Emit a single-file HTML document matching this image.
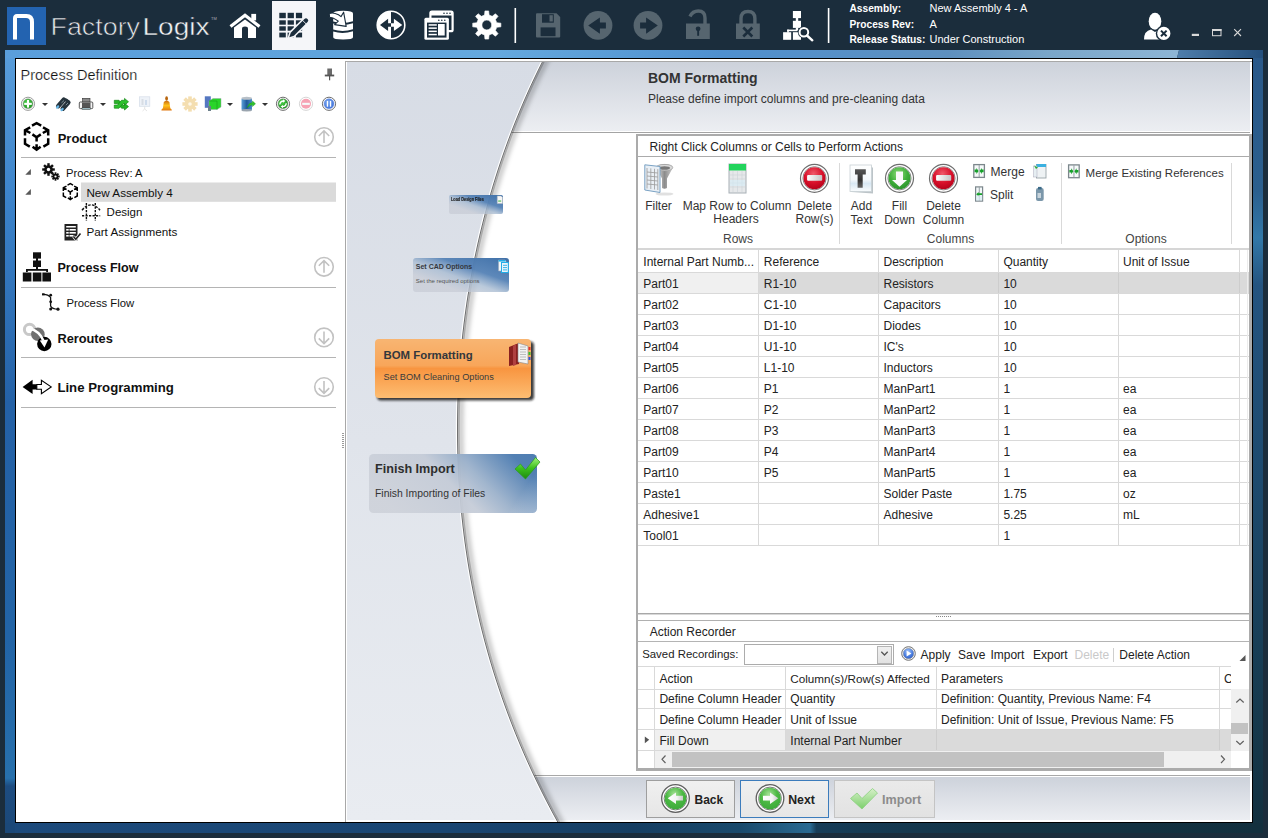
<!DOCTYPE html>
<html><head><meta charset="utf-8">
<style>
*{box-sizing:border-box}
body{margin:0;width:1268px;height:838px;overflow:hidden;position:relative;background:#1b2d3c;font-family:"Liberation Sans",sans-serif;color:#222}
.a{position:absolute}
.t{position:absolute;white-space:nowrap;line-height:1}
svg{overflow:visible}
</style></head><body>
<div id="topbar" class="a" style="left:0;top:0;width:1268px;height:50px;background:#1b2d3c">
<svg class="a" style="left:0;top:0" width="1268" height="50" viewBox="0 0 1268 50">
<rect x="7" y="7" width="39" height="38" fill="#2363b0"/>
<path d="M13,39.6 V18.2 Q13,14.3 17,14.1 L26.5,13.9 Q34,14 34,22 V39.6 H30 V22.2 Q30,18 26,18 H17 V39.6 Z" fill="#fff"/>
<text x="50.5" y="35" font-family="Liberation Sans" font-size="23" fill="#e6e8ea" textLength="89.5" lengthAdjust="spacingAndGlyphs" stroke="#1b2d3c" stroke-width="0.6">Factory</text>
<text x="142.5" y="35" font-family="Liberation Sans" font-size="23" fill="#f2f3f4" textLength="67" lengthAdjust="spacingAndGlyphs" stroke="#1b2d3c" stroke-width="0.4">Logix</text>
<text x="211" y="20" font-family="Liberation Sans" font-size="4" fill="#aab">TM</text>
<!-- home -->
<path d="M230.5,26.5 L245,15.3 L259.5,26.5" fill="none" stroke="#fff" stroke-width="3.2" stroke-linejoin="miter"/>
<rect x="251.3" y="13.9" width="4.8" height="6.5" fill="#fff"/>
<path d="M234,27.5 L245,19.6 L256,27.5 V38 H248 V29 Q248,26.6 245,26.6 Q242,26.6 242,29 V38 H234 Z" fill="#fff"/>
<!-- selected box -->
<rect x="272" y="1" width="44" height="49" fill="#f5f6f9"/>
<g fill="#1b2d3c">
<rect x="279.3" y="12.8" width="6.5" height="5.4"/><rect x="287.6" y="12.8" width="6.3" height="5.4"/><rect x="295.9" y="12.8" width="6.2" height="5.4"/>
<rect x="279.3" y="20.3" width="6.5" height="4.4"/><rect x="287.6" y="20.3" width="6.3" height="4.4"/><rect x="295.9" y="20.3" width="6.2" height="4.4"/>
<rect x="279.3" y="26.3" width="6.5" height="4.4"/><rect x="287.6" y="26.3" width="6.3" height="4.4"/><rect x="295.9" y="26.3" width="6.2" height="4.4"/>
<rect x="279.3" y="32.6" width="6.5" height="4.8"/><rect x="287.6" y="32.6" width="6.3" height="4.8"/><rect x="295.9" y="32.6" width="6.2" height="4.8"/>
</g>
<path d="M289.3,37.2 L290.74,32.64 L304.44,18.94 A2.2,2.2 0 0 1 307.56,22.06 L293.86,35.76 Z" fill="#1b2d3c" stroke="#f5f6f9" stroke-width="3" stroke-linejoin="round"/>
<path d="M289.3,37.2 L290.74,32.64 L304.44,18.94 A2.2,2.2 0 0 1 307.56,22.06 L293.86,35.76 Z" fill="#1b2d3c"/>
<path d="M302,19.8 L306.6,24.4" stroke="#f5f6f9" stroke-width=".9"/>
<!-- database -->
<path d="M333.2,13.2 Q333.2,10.7 343.1,10.7 Q353,10.7 353,13.2 V21.2 Q343,24.6 333.2,21.6 Z" fill="#fff"/>
<path d="M333.2,23.6 Q343,26.6 353,23.2 V29.3 Q343,32.4 333.2,29.6 Z" fill="#fff"/>
<path d="M333.2,31.6 Q343,34.5 353,31.2 V37.2 Q353,39.4 343.1,39.4 Q333.2,39.4 333.2,37.2 Z" fill="#fff"/>
<path d="M329.2,13.6 Q333,12 338.5,14.8 L341,16.6 L343.6,12.2 L346.2,26.4 L334.6,24.6 L338.3,21.2 L336,19.6 Q333,17.6 329.6,17.2 Z" fill="#fff" stroke="#1b2d3c" stroke-width="1.1" stroke-linejoin="round"/>
<!-- circle arrows -->
<circle cx="391" cy="25" r="13.8" fill="none" stroke="#fff" stroke-width="1.6"/>
<path d="M391,11.2 A13.8,13.8 0 0 0 391,38.8 Z" fill="#fff"/>
<path d="M380,25 L388.1,18.8 V23.2 H391 V26.7 H388.1 V31 Z" fill="#1b2d3c"/>
<path d="M402.3,25 L393.9,18.8 V23.2 H391 V26.7 H393.9 V31 Z" fill="#fff"/>
<!-- windows -->
<rect x="430.4" y="11.7" width="22.2" height="19.5" rx="1.5" fill="none" stroke="#fff" stroke-width="2.2"/>
<rect x="430" y="11" width="23" height="4.5" fill="#fff"/>
<circle cx="444" cy="13.2" r=".8" fill="#1b2d3c"/><circle cx="447" cy="13.2" r=".8" fill="#1b2d3c"/><circle cx="450" cy="13.2" r=".8" fill="#1b2d3c"/>
<rect x="424.4" y="17.8" width="24.5" height="22" rx="1.5" fill="#fff"/>
<rect x="427" y="22.6" width="19.5" height="15" fill="#1b2d3c"/>
<circle cx="438.8" cy="20.2" r=".8" fill="#1b2d3c"/><circle cx="441.8" cy="20.2" r=".8" fill="#1b2d3c"/><circle cx="444.8" cy="20.2" r=".8" fill="#1b2d3c"/>
<rect x="428.6" y="24.2" width="8.2" height="1.5" fill="#fff"/><rect x="428.6" y="27.4" width="8.2" height="1.5" fill="#fff"/><rect x="428.6" y="30.6" width="8.2" height="1.5" fill="#fff"/><rect x="428.6" y="33.8" width="8.2" height="1.5" fill="#fff"/>
<rect x="438" y="24" width="6.7" height="11.5" fill="#fff"/>
<!-- gear -->
<path d="M484.51,15.06 L484.95,10.92 L488.65,10.92 L489.09,15.06 L492.21,16.35 L495.44,13.73 L498.07,16.36 L495.45,19.59 L496.74,22.71 L500.88,23.15 L500.88,26.85 L496.74,27.29 L495.45,30.41 L498.07,33.64 L495.44,36.27 L492.21,33.65 L489.09,34.94 L488.65,39.08 L484.95,39.08 L484.51,34.94 L481.39,33.65 L478.16,36.27 L475.53,33.64 L478.15,30.41 L476.86,27.29 L472.72,26.85 L472.72,23.15 L476.86,22.71 L478.15,19.59 L475.53,16.36 L478.16,13.73 L481.39,16.35 Z M491.7,25 A4.9,4.9 0 1 0 481.90000000000003,25 A4.9,4.9 0 1 0 491.7,25 Z" fill="#fff" fill-rule="evenodd" stroke="#fff" stroke-width=".6" stroke-linejoin="round"/>
<rect x="514.5" y="8" width="1.6" height="35" fill="#fff"/>
<!-- floppy -->
<path d="M536,14.2 Q536,13.2 537,13.2 H556.5 L560.2,17 V36.6 Q560.2,37.6 559.2,37.6 H537 Q536,37.6 536,36.6 Z" fill="#56656f"/>
<rect x="542" y="14.2" width="11.8" height="8.5" fill="#1b2d3c"/>
<rect x="549.5" y="15.2" width="3.3" height="6.3" fill="#56656f"/>
<rect x="540.6" y="27.4" width="14.9" height="8.8" fill="#1b2d3c"/>
<!-- back/fwd -->
<circle cx="598" cy="25.4" r="14.4" fill="#56656f"/>
<path d="M588.2,25.4 L599.9,17.4 V22.4 H605.9 V28.4 H599.9 V33.7 Z" fill="#1b2d3c"/>
<circle cx="648" cy="25.4" r="14.4" fill="#56656f"/>
<path d="M657.8,25.4 L646.1,17.4 V22.4 H640.1 V28.4 H646.1 V33.7 Z" fill="#1b2d3c"/>
<!-- unlock -->
<path d="M690,16.5 Q692.5,11 698.3,11 Q705,11 705,18 V24" fill="none" stroke="#56656f" stroke-width="3.4"/>
<rect x="686" y="23.5" width="23.8" height="15.5" fill="#56656f"/>
<circle cx="698.1" cy="28.8" r="2.4" fill="#1b2d3c"/><rect x="697.2" y="29" width="1.9" height="6.8" fill="#1b2d3c"/>
<!-- lock x -->
<path d="M741,24 V18.5 Q741,11.5 748,11.5 Q754.9,11.5 754.9,18.5 V24" fill="none" stroke="#56656f" stroke-width="3.4"/>
<rect x="736" y="23.5" width="23.8" height="15.5" fill="#56656f"/>
<path d="M743.3,27.5 L752.3,36.5 M752.3,27.5 L743.3,36.5" stroke="#1b2d3c" stroke-width="2.6"/>
<!-- hierarchy search -->
<g fill="#fff">
<rect x="792.9" y="11" width="8.1" height="7.1"/><rect x="795.8" y="17.5" width="2.4" height="4"/>
<rect x="792.9" y="20.8" width="8.1" height="7.1"/><rect x="795.8" y="27.5" width="2.4" height="3"/>
<rect x="787.2" y="29.6" width="10" height="1.6"/><rect x="787.2" y="29.6" width="1.6" height="3"/>
<rect x="783.1" y="32.2" width="8.1" height="7.6"/><rect x="792.9" y="32.2" width="8.1" height="7.6"/>
</g>
<circle cx="803.9" cy="32.2" r="6" fill="#1b2d3c"/>
<circle cx="803.9" cy="32.2" r="4.3" fill="#1b2d3c" stroke="#fff" stroke-width="2"/>
<path d="M807,35.5 L812.3,40.3" stroke="#fff" stroke-width="2.4" stroke-linecap="round"/>
<rect x="827.8" y="8" width="1.6" height="35" fill="#fff"/>
<!-- user -->
<ellipse cx="1155" cy="21.3" rx="6.3" ry="8.5" fill="#fff"/>
<path d="M1144,39.6 Q1144,31 1151,29.6 L1155,32 L1159,29.6 Q1166,31 1166,39.6 Z" fill="#fff"/>
<circle cx="1163.8" cy="33.4" r="8" fill="#1b2d3c"/>
<circle cx="1163.8" cy="33.4" r="6.6" fill="#fff"/>
<path d="M1161,30.6 L1166.6,36.2 M1166.6,30.6 L1161,36.2" stroke="#1b2d3c" stroke-width="2"/>
<!-- window controls -->
<rect x="1191.8" y="33.8" width="7.2" height="2.2" fill="#d8d8d8"/>
<rect x="1212.5" y="29.5" width="8.5" height="6.2" fill="none" stroke="#d8d8d8" stroke-width="1"/>
<rect x="1212" y="29" width="9.5" height="2" fill="#d8d8d8"/>
<path d="M1234.2,29.2 L1241,36 M1241,29.2 L1234.2,36" stroke="#d8d8d8" stroke-width="1.1"/>
</svg>
<div class="t" style="left:849.5px;top:1.3px;font-size:10.2px;font-weight:700;color:#fff;line-height:15.5px">Assembly:<br>Process Rev:<br>Release Status:</div>
<div class="t" style="left:929.5px;top:1px;font-size:11px;color:#fff;line-height:15.5px">New Assembly 4 - A<br>A<br>Under Construction</div>
</div><svg class="a" style="left:0;top:0" width="1268" height="838" viewBox="0 0 1268 838">
<defs>
<linearGradient id="fT" x1="5" y1="0" x2="1263" y2="0" gradientUnits="userSpaceOnUse"><stop offset="0" stop-color="#5a9edb"/><stop offset=".25" stop-color="#5fa4dd"/><stop offset=".39" stop-color="#65a9de"/><stop offset=".57" stop-color="#4f90cf"/><stop offset=".75" stop-color="#5e90bf"/><stop offset=".83" stop-color="#7aa6c9"/><stop offset=".93" stop-color="#8db5d5"/><stop offset="1" stop-color="#8db5d5"/></linearGradient>
<linearGradient id="fT2" x1="1177" y1="0" x2="1263" y2="0" gradientUnits="userSpaceOnUse">
<stop offset="0" stop-color="#4f7eab"/><stop offset="1" stop-color="#244f7c"/></linearGradient>
<linearGradient id="fL" x1="0" y1="50" x2="0" y2="833" gradientUnits="userSpaceOnUse">
<stop offset="0" stop-color="#5a9edb"/><stop offset=".2" stop-color="#3b82c9"/><stop offset=".45" stop-color="#2461a6"/><stop offset=".75" stop-color="#2264a6"/><stop offset=".93" stop-color="#2770ac"/><stop offset=".94" stop-color="#1d4c80"/><stop offset="1" stop-color="#1b4878"/></linearGradient>
<linearGradient id="fB" x1="5" y1="0" x2="1263" y2="0" gradientUnits="userSpaceOnUse">
<stop offset="0" stop-color="#1c4a7c"/><stop offset=".35" stop-color="#1a4672"/><stop offset=".5" stop-color="#173f62"/><stop offset=".585" stop-color="#1a4a6c"/><stop offset=".64" stop-color="#2a6a92"/><stop offset=".645" stop-color="#173d58"/><stop offset=".8" stop-color="#153444"/><stop offset="1" stop-color="#13303e"/></linearGradient>
<linearGradient id="fR" x1="0" y1="50" x2="0" y2="833" gradientUnits="userSpaceOnUse">
<stop offset="0" stop-color="#2a5888"/><stop offset=".18" stop-color="#2b5f8e"/><stop offset=".24" stop-color="#3278a8"/><stop offset=".3" stop-color="#245480"/><stop offset=".55" stop-color="#1d4a6e"/><stop offset=".8" stop-color="#173c52"/><stop offset="1" stop-color="#13303e"/></linearGradient>
</defs>
<polygon points="5,50 1179,50 1177,58 5,58" fill="url(#fT)"/>
<polygon points="1179,50 1263,50 1263,58 1177,58" fill="url(#fT2)"/>
<rect x="5" y="58" width="10" height="775" fill="url(#fL)"/>
<rect x="1253" y="58" width="10" height="775" fill="url(#fR)"/>
<rect x="15" y="823" width="1238" height="10" fill="url(#fB)"/>
<rect x="5" y="823" width="10" height="10" fill="#1b4878"/>
<rect x="1253" y="823" width="10" height="10" fill="#13303e"/>
</svg>
<div id="content" class="a" style="left:15px;top:58px;width:1238px;height:765px;border:1px solid #000;background:#fff"></div>
<div class="t" style="left:20.5px;top:67.7px;font-size:14.5px;font-weight:400;color:#111;-webkit-text-stroke:0.22px #fff">Process Definition</div>
<svg class="a" style="left:0;top:0" width="346" height="838" viewBox="0 0 346 838">
<defs>
<radialGradient id="gG" cx=".4" cy=".35" r=".7"><stop offset="0" stop-color="#4cd34c"/><stop offset="1" stop-color="#1c8e1c"/></radialGradient>
<radialGradient id="bG" cx=".4" cy=".35" r=".7"><stop offset="0" stop-color="#7aa8f0"/><stop offset="1" stop-color="#3d6fd8"/></radialGradient>
<linearGradient id="bell" x1="0" y1="0" x2="0" y2="1"><stop offset="0" stop-color="#c86a10"/><stop offset=".5" stop-color="#ffc21a"/><stop offset="1" stop-color="#e07810"/></linearGradient>
<linearGradient id="dbG" x1="0" y1="0" x2="1" y2="0"><stop offset="0" stop-color="#5aa0d8"/><stop offset=".5" stop-color="#1e5a9a"/><stop offset="1" stop-color="#4a8cc8"/></linearGradient>
</defs>
<!-- pin -->
<path d="M327.3,68.5 H332 V75 H327.3 Z" fill="#6a6a6a"/>
<rect x="324.8" y="74.6" width="9.4" height="1.8" fill="#555"/>
<rect x="329" y="76" width="1.2" height="4.3" fill="#555"/>
<!-- plus circle -->
<circle cx="28" cy="103.8" r="6.6" fill="#fff" stroke="#9b9b9b" stroke-width="1"/>
<circle cx="28" cy="103.8" r="5" fill="url(#gG)" stroke="#aaa" stroke-width=".6"/>
<rect x="24.2" y="102.8" width="7.6" height="2.1" fill="#fff"/><rect x="26.95" y="100" width="2.1" height="7.6" fill="#fff"/>
<path d="M42,103 H48 L45,106 Z" fill="#333"/>
<!-- binoculars -->
<g stroke="#26343d" stroke-linecap="round" fill="none">
<path d="M58.3,106 L63.8,99.8" stroke-width="4.6"/>
<path d="M62.8,108.6 L68.3,102.4" stroke-width="4.6"/>
<path d="M63.8,99.8 Q67,99 68.3,102.4" stroke-width="3"/>
</g>
<path d="M61.5,102.8 L64,100.5 M65.8,105.2 L68,103" stroke="#8fa0aa" stroke-width=".8"/>
<ellipse cx="57.6" cy="107" rx="2" ry="1.3" transform="rotate(-48 57.6 107)" fill="#6ab8e8"/>
<ellipse cx="62.1" cy="109.5" rx="2" ry="1.3" transform="rotate(-48 62.1 109.5)" fill="#6ab8e8"/>
<!-- printer -->
<rect x="82.5" y="98.3" width="7.5" height="4" fill="#8a8a8a" stroke="#333" stroke-width=".6"/>
<rect x="79.3" y="102" width="13.5" height="6.6" rx="1" fill="#f4f4f4" stroke="#333" stroke-width=".8"/>
<rect x="82" y="102.5" width="8.5" height="6" fill="#555"/>
<rect x="82" y="108" width="8.5" height="1.6" fill="#bfe6ef" stroke="#333" stroke-width=".5"/>
<path d="M100,103 H106 L103,106 Z" fill="#333"/>
<!-- shuffle arrows -->
<path d="M114.3,100.3 H119 L123,105 H124.5 V103.2 L128.5,106.6 L124.5,110 V108.2 H121.5 L117.5,103.5 H114.3 Z" fill="#28b428" stroke="#168a16" stroke-width=".7"/>
<path d="M114.3,108.2 H119 L123,103.5 H124.5 V105.2 L128.5,101.8 L124.5,98.4 V100.3 H121.5 L117.5,105 H114.3 Z" fill="#2ec22e" stroke="#168a16" stroke-width=".7"/>
<!-- faded chart -->
<rect x="139.5" y="96.8" width="10.3" height="9.5" fill="#eef2f8" stroke="#d5dde8" stroke-width=".7"/>
<rect x="141.5" y="99" width="2" height="6" fill="#d8dde4"/><rect x="145" y="100" width="2" height="5" fill="#cfdcec"/>
<path d="M144.7,106.5 V109 L142.5,111 M144.7,109 L147,111" stroke="#ddd" stroke-width=".8" fill="none"/>
<!-- bell -->
<ellipse cx="166.6" cy="98.5" rx="1.4" ry="2.3" fill="#b8650e"/>
<path d="M163.8,102 Q166.6,99.3 169.4,102 L170.3,108.3 Q172,109.2 171.8,110.5 H161.4 Q161.2,109.2 162.9,108.3 Z" fill="url(#bell)"/>
<!-- pale gear -->
<g transform="translate(190,104)" fill="#f4deb0">
<circle r="5.3"/>
<rect x="-1.8" y="-7.6" width="3.6" height="3.4"/><rect x="-1.8" y="4.2" width="3.6" height="3.4"/>
<rect x="-7.6" y="-1.8" width="3.4" height="3.6"/><rect x="4.2" y="-1.8" width="3.4" height="3.6"/>
<rect x="-1.8" y="-7.6" width="3.6" height="3.4" transform="rotate(45)"/><rect x="-1.8" y="4.2" width="3.6" height="3.4" transform="rotate(45)"/>
<rect x="-7.6" y="-1.8" width="3.4" height="3.6" transform="rotate(45)"/><rect x="4.2" y="-1.8" width="3.4" height="3.6" transform="rotate(45)"/>
<circle r="1.8" fill="#fff8e8"/>
</g>
<!-- box green -->
<rect x="204.8" y="96.3" width="6" height="11.5" fill="#5577c0"/>
<path d="M209,101 L213,98.5 H221 V107 L217,109.5 H209 Z" fill="#2ad42a" stroke="#9aa" stroke-width=".5"/>
<path d="M209,101 H217 V109.5" fill="none" stroke="#1a9a1a" stroke-width=".6"/>
<rect x="208" y="106" width="3" height="5" fill="#6c7f8a"/>
<path d="M227,103 H233 L230,106 Z" fill="#333"/>
<!-- database arrow -->
<rect x="241.5" y="98" width="10.5" height="12.5" rx="1.5" fill="url(#dbG)"/>
<ellipse cx="246.7" cy="98.3" rx="5.2" ry="1.5" fill="#b8c0c8"/>
<ellipse cx="246.7" cy="110.2" rx="5.2" ry="1.2" fill="#9aa4ae"/>
<path d="M247,107.8 Q249,102.5 252.5,102.6 V101 L255.5,103.8 L252.5,106.5 V104.8 Q250,105 247,107.8 Z" fill="#2ec22e" stroke="#148a14" stroke-width=".4"/>
<path d="M262,103 H268 L265,106 Z" fill="#333"/>
<!-- green refresh circle -->
<circle cx="283" cy="103.8" r="6.6" fill="#fff" stroke="#6e6e6e" stroke-width="1"/>
<circle cx="283" cy="103.8" r="5" fill="url(#gG)" stroke="#888" stroke-width=".5"/>
<path d="M279.8,104.5 Q280,101.2 283.5,101 M286.2,103.2 Q286,106.5 282.5,106.6" stroke="#fff" stroke-width="1.4" fill="none"/>
<path d="M283,99.3 L285.4,101 L283,102.7 Z M283,108.3 L280.6,106.6 L283,104.9 Z" fill="#fff"/>
<!-- pink minus -->
<circle cx="306" cy="103.8" r="6.6" fill="#fff" stroke="#d6d6d6" stroke-width="1"/>
<circle cx="306" cy="103.8" r="5" fill="#f6a3b4"/>
<rect x="302.2" y="102.8" width="7.6" height="2.1" fill="#f4fbfb"/>
<!-- blue pause -->
<circle cx="329" cy="103.8" r="6.6" fill="#fff" stroke="#6e6e6e" stroke-width="1"/>
<circle cx="329" cy="103.8" r="5" fill="url(#bG)" stroke="#6b8de0" stroke-width=".5"/>
<rect x="326.8" y="100.9" width="1.3" height="5.8" fill="#fff"/><rect x="329.9" y="100.9" width="1.3" height="5.8" fill="#fff"/>

<!-- Product icon -->
<g id="prodIco" fill="none" stroke="#000" stroke-width="2.5" stroke-linejoin="miter" stroke-linecap="butt">
<path d="M32,125.6 L36.6,123.2 L41.2,125.6"/>
<path d="M30.2,127.4 L25,130.2 V135.4 M25,130.2 L30.4,133"/>
<path d="M43,127.4 L48.2,130.2 V135.4 M48.2,130.2 L42.8,133"/>
<path d="M32.4,134.4 L36.6,137.2 L40.8,134.4 M36.6,137.2 V141.6"/>
<path d="M25,138.2 V143.8 L29.8,146.6"/>
<path d="M48.2,138.2 V143.8 L43.4,146.6"/>
<path d="M36.6,144.2 V149.2 M32.6,146.8 L36.6,149.8 L40.6,146.8"/>
</g>
<!-- up circles -->
<g fill="none" stroke="#c2c2c2" stroke-width="1.6">
<circle cx="324" cy="137" r="9.3"/><path d="M324,131 V143 M318.8,136 L324,130.8 L329.2,136"/>
<circle cx="324" cy="266.8" r="9.3"/><path d="M324,260.8 V272.8 M318.8,265.8 L324,260.6 L329.2,265.8"/>
<circle cx="324" cy="337.4" r="9.3"/><path d="M324,331.4 V343.4 M318.8,338.4 L324,343.6 L329.2,338.4"/>
<circle cx="324" cy="387.1" r="9.3"/><path d="M324,381.1 V393.1 M318.8,388.1 L324,393.3 L329.2,388.1"/>
</g>
<!-- separators -->
<rect x="21" y="157" width="315" height="1" fill="#b4b4b4"/>
<rect x="21" y="287" width="315" height="1" fill="#b4b4b4"/>
<rect x="21" y="357" width="315" height="1" fill="#b4b4b4"/>
<rect x="21" y="407" width="315" height="1" fill="#b4b4b4"/>
<!-- selection -->
<rect x="81" y="182.5" width="255" height="19.3" fill="#dadada"/>
<!-- expanders -->
<path d="M25.3,174.7 H30.9 V169 Z" fill="#595959"/>
<path d="M25.3,194.7 H30.9 V189 Z" fill="#595959"/>
<!-- gears icon -->
<g transform="translate(48.5,169.5)" fill="#111">
<circle r="4.3"/>
<rect x="-1.2" y="-6.3" width="2.4" height="12.6"/><rect x="-6.3" y="-1.2" width="12.6" height="2.4"/>
<rect x="-1.2" y="-6.3" width="2.4" height="12.6" transform="rotate(45)"/><rect x="-6.3" y="-1.2" width="12.6" height="2.4" transform="rotate(45)"/>
<circle r="1.7" fill="#fff"/>
</g>
<g transform="translate(55.5,176.5)" fill="#111">
<circle r="2.8"/>
<rect x="-.9" y="-4.2" width="1.8" height="8.4"/><rect x="-4.2" y="-.9" width="8.4" height="1.8"/>
<rect x="-.9" y="-4.2" width="1.8" height="8.4" transform="rotate(45)"/><rect x="-4.2" y="-.9" width="8.4" height="1.8" transform="rotate(45)"/>
<circle r="1.1" fill="#fff"/>
</g>
<!-- assembly icon small -->
<use href="#prodIco" transform="translate(70.3,191.6) scale(0.6) translate(-36.6,-136.5)"/>
<!-- design icon -->
<g fill="none" stroke="#111" stroke-width="1.4">
<path d="M86.4,203 V221 M95.3,203 V221 M82,215.7 H100.2" stroke-dasharray="2.2 1.3"/>
<path d="M82,210.2 Q90.8,199.5 100,210.2" stroke-dasharray="2.6 1.3"/>
</g>
<!-- part assignments icon -->
<rect x="64.5" y="224" width="13" height="16.5" fill="#222"/>
<rect x="66.2" y="226" width="9.6" height="1.5" fill="#fff"/>
<g fill="#fff"><rect x="66.2" y="229" width="2.5" height="1.6"/><rect x="69.5" y="229" width="6.3" height="1.6"/>
<rect x="66.2" y="232" width="2.5" height="1.6"/><rect x="69.5" y="232" width="6.3" height="1.6"/>
<rect x="66.2" y="235" width="2.5" height="1.6"/><rect x="69.5" y="235" width="4" height="1.6"/></g>
<path d="M73.5,236.5 L75.8,239.2 L80.5,233.5" fill="none" stroke="#fff" stroke-width="3"/>
<path d="M73.5,236.5 L75.8,239.2 L80.5,233.5" fill="none" stroke="#222" stroke-width="1.6"/>
<!-- process flow icon -->
<g fill="#111">
<rect x="33" y="252.3" width="8" height="6.3"/><rect x="36" y="258" width="2" height="3"/>
<rect x="33" y="260.5" width="8" height="6.5"/><rect x="36" y="266.5" width="2" height="3"/>
<rect x="26" y="269" width="22" height="1.8"/><rect x="26" y="269" width="1.8" height="3"/><rect x="46.2" y="269" width="1.8" height="3"/>
<rect x="22.8" y="272.5" width="8.6" height="9"/><rect x="32.8" y="272.5" width="8.6" height="9"/><rect x="42.4" y="272.5" width="8.6" height="9"/>
</g>
<!-- sub process flow icon -->
<path d="M43.2,294.3 Q48.5,294.3 50.6,297.5 V306 Q52,309.2 58,309.2" fill="none" stroke="#111" stroke-width="1.3"/>
<rect x="42" y="293.3" width="2.6" height="2.1" fill="#111"/>
<circle cx="50.7" cy="295.2" r="1.4" fill="#111"/><circle cx="50.7" cy="301.8" r="1.4" fill="#111"/><circle cx="50.7" cy="309" r="1.5" fill="#111"/><circle cx="58" cy="309.2" r="1.6" fill="#111"/>
<!-- reroutes icon -->
<circle cx="29.6" cy="329.4" r="5.2" fill="none" stroke="#c8c8c8" stroke-width="3"/>
<circle cx="37.9" cy="334.2" r="6.8" fill="#707070"/>
<circle cx="44.3" cy="344" r="7.2" fill="#000"/>
<circle cx="44.3" cy="344" r="4.2" fill="none" stroke="#fff" stroke-width="1" opacity="0"/>
<path d="M29.5,328.5 Q39.5,331 43.3,340.5" fill="none" stroke="#fff" stroke-width="2.6"/>
<path d="M39.8,340.5 L44.5,347.6 L48.2,339.6 Z" fill="#fff"/>
<!-- line programming icon -->
<path d="M22.6,386.9 L32.6,379.8 V384.3 H37.2 V389.4 H32.6 V394 Z" fill="#000"/>
<path d="M51.2,386.9 L41.4,380.2 V384.5 H36.8 V389.2 H41.4 V393.6 Z" fill="#fff" stroke="#000" stroke-width="1.1" stroke-linejoin="miter"/>
</svg>
<div class="t" style="left:57.7px;top:132.0px;font-size:13px;font-weight:700;color:#111;">Product</div>
<div class="t" style="left:66px;top:167.5px;font-size:11.2px;font-weight:400;color:#111;">Process Rev: A</div>
<div class="t" style="left:86.4px;top:186.6px;font-size:11.7px;font-weight:400;color:#111;">New Assembly 4</div>
<div class="t" style="left:106.6px;top:207.0px;font-size:11.5px;font-weight:400;color:#111;">Design</div>
<div class="t" style="left:86.4px;top:226.1px;font-size:11.7px;font-weight:400;color:#111;">Part Assignments</div>
<div class="t" style="left:57.4px;top:262.3px;font-size:12.6px;font-weight:700;color:#111;">Process Flow</div>
<div class="t" style="left:66.4px;top:298.1px;font-size:11.3px;font-weight:400;color:#111;">Process Flow</div>
<div class="t" style="left:57.4px;top:332.7px;font-size:12.8px;font-weight:700;color:#111;">Reroutes</div>
<div class="t" style="left:57.4px;top:381.2px;font-size:13.2px;font-weight:700;color:#111;">Line Programming</div>
<div class="a" style="left:342px;top:433px;width:2px;height:1px;background:#9a9a9a;"></div>
<div class="a" style="left:342px;top:435px;width:2px;height:1px;background:#9a9a9a;"></div>
<div class="a" style="left:342px;top:437px;width:2px;height:1px;background:#9a9a9a;"></div>
<div class="a" style="left:342px;top:439px;width:2px;height:1px;background:#9a9a9a;"></div>
<div class="a" style="left:342px;top:441px;width:2px;height:1px;background:#9a9a9a;"></div>
<div class="a" style="left:342px;top:443px;width:2px;height:1px;background:#9a9a9a;"></div>
<div class="a" style="left:342px;top:445px;width:2px;height:1px;background:#9a9a9a;"></div>
<div class="a" style="left:342px;top:447px;width:2px;height:1px;background:#9a9a9a;"></div><div id="wiz" class="a" style="left:345px;top:61px;width:907px;height:761px;border-left:1px solid #a8a8a8;border-top:1px solid #a8a8a8;overflow:hidden">
<svg class="a" style="left:-346px;top:-62px" width="1268" height="838" viewBox="0 0 1268 838">
<defs>
<linearGradient id="lg" x1="0" y1="0" x2="0" y2="1"><stop offset="0" stop-color="#d7dce5"/><stop offset="1" stop-color="#e9ecf1"/></linearGradient>
<linearGradient id="hg" x1="0" y1="0" x2="0" y2="1"><stop offset="0" stop-color="#cdd2db"/><stop offset="1" stop-color="#eceef2"/></linearGradient>
<clipPath id="rc"><path d="M549.64,48 L548.06,51 L546.50,54 L544.95,57 L543.43,60 L541.92,63 L540.42,66 L538.95,69 L537.49,72 L536.04,75 L534.61,78 L533.20,81 L531.81,84 L530.43,87 L529.06,90 L527.71,93 L526.38,96 L525.06,99 L523.76,102 L522.47,105 L521.20,108 L519.94,111 L518.70,114 L517.47,117 L516.26,120 L515.06,123 L513.87,126 L512.70,129 L511.55,132 L510.41,135 L509.28,138 L508.17,141 L507.07,144 L505.98,147 L504.91,150 L503.85,153 L502.81,156 L501.78,159 L500.76,162 L499.76,165 L498.77,168 L497.79,171 L496.82,174 L495.87,177 L494.94,180 L494.01,183 L493.10,186 L492.20,189 L491.31,192 L490.44,195 L489.58,198 L488.73,201 L487.89,204 L487.07,207 L486.25,210 L485.45,213 L484.67,216 L483.89,219 L483.13,222 L482.38,225 L481.64,228 L480.91,231 L480.20,234 L479.49,237 L478.80,240 L478.12,243 L477.45,246 L476.80,249 L476.15,252 L475.52,255 L474.90,258 L474.29,261 L473.69,264 L473.10,267 L472.52,270 L471.96,273 L471.40,276 L470.86,279 L470.33,282 L469.81,285 L469.30,288 L468.80,291 L468.32,294 L467.84,297 L467.37,300 L466.92,303 L466.48,306 L466.05,309 L465.62,312 L465.21,315 L464.82,318 L464.43,321 L464.05,324 L463.68,327 L463.33,330 L462.98,333 L462.64,336 L462.32,339 L462.01,342 L461.70,345 L461.41,348 L461.13,351 L460.86,354 L460.60,357 L460.35,360 L460.11,363 L459.88,366 L459.66,369 L459.46,372 L459.26,375 L459.07,378 L458.90,381 L458.73,384 L458.58,387 L458.43,390 L458.30,393 L458.18,396 L458.06,399 L457.96,402 L457.87,405 L457.79,408 L457.72,411 L457.66,414 L457.61,417 L457.57,420 L457.54,423 L457.52,426 L457.52,429 L457.52,432 L457.53,435 L457.56,438 L457.59,441 L457.64,444 L457.69,447 L457.76,450 L457.84,453 L457.92,456 L458.02,459 L458.13,462 L458.25,465 L458.38,468 L458.52,471 L458.68,474 L458.84,477 L459.01,480 L459.20,483 L459.39,486 L459.60,489 L459.82,492 L460.04,495 L460.28,498 L460.53,501 L460.79,504 L461.06,507 L461.35,510 L461.64,513 L461.94,516 L462.26,519 L462.58,522 L462.92,525 L463.27,528 L463.63,531 L464.00,534 L464.38,537 L464.78,540 L465.18,543 L465.60,546 L466.03,549 L466.47,552 L466.92,555 L467.38,558 L467.85,561 L468.34,564 L468.83,567 L469.34,570 L469.86,573 L470.39,576 L470.93,579 L471.49,582 L472.05,585 L472.63,588 L473.22,591 L473.82,594 L474.44,597 L475.06,600 L475.70,603 L476.35,606 L477.01,609 L477.69,612 L478.37,615 L479.07,618 L479.78,621 L480.51,624 L481.24,627 L481.99,630 L482.75,633 L483.52,636 L484.31,639 L485.10,642 L485.91,645 L486.74,648 L487.57,651 L488.42,654 L489.28,657 L490.15,660 L491.04,663 L491.94,666 L492.85,669 L493.78,672 L494.72,675 L495.67,678 L496.64,681 L497.61,684 L498.60,687 L499.61,690 L500.63,693 L501.66,696 L502.70,699 L503.76,702 L504.84,705 L505.92,708 L507.02,711 L508.13,714 L509.26,717 L510.40,720 L511.56,723 L512.72,726 L513.91,729 L515.10,732 L516.31,735 L517.54,738 L518.78,741 L520.03,744 L521.30,747 L522.58,750 L523.88,753 L525.19,756 L526.52,759 L527.86,762 L529.21,765 L530.58,768 L531.96,771 L533.36,774 L534.78,777 L536.21,780 L537.65,783 L539.11,786 L540.58,789 L542.07,792 L543.58,795 L545.10,798 L546.63,801 L548.18,804 L549.75,807 L551.33,810 L552.92,813 L554.54,816 L556.17,819 L557.81,822 L559.47,825 L561.14,828 L562.83,831 L564.54,834 L1300,830 L1300,40 Z"/></clipPath>
<filter id="bl" x="-50%" y="-10%" width="200%" height="120%"><feGaussianBlur stdDeviation="2"/></filter><filter id="bl2" x="-50%" y="-10%" width="200%" height="120%"><feGaussianBlur stdDeviation=".7"/></filter>
</defs>
<rect x="0" y="0" width="1268" height="838" fill="#fff"/>
<rect x="347" y="62" width="903" height="758" fill="url(#lg)"/>
<g clip-path="url(#rc)">
<rect x="340" y="62" width="920" height="770" fill="#fff"/>
<rect x="340" y="62" width="910" height="69" fill="url(#hg)"/>
<rect x="340" y="132" width="910" height="1" fill="#a4a4a4"/>
<rect x="340" y="775" width="910" height="1" fill="#a8a8a8"/>
<rect x="340" y="776" width="910" height="1" fill="#fff"/><rect x="340" y="777" width="910" height="43" fill="url(#hg)"/>
<path d="M549.64,48 L548.06,51 L546.50,54 L544.95,57 L543.43,60 L541.92,63 L540.42,66 L538.95,69 L537.49,72 L536.04,75 L534.61,78 L533.20,81 L531.81,84 L530.43,87 L529.06,90 L527.71,93 L526.38,96 L525.06,99 L523.76,102 L522.47,105 L521.20,108 L519.94,111 L518.70,114 L517.47,117 L516.26,120 L515.06,123 L513.87,126 L512.70,129 L511.55,132 L510.41,135 L509.28,138 L508.17,141 L507.07,144 L505.98,147 L504.91,150 L503.85,153 L502.81,156 L501.78,159 L500.76,162 L499.76,165 L498.77,168 L497.79,171 L496.82,174 L495.87,177 L494.94,180 L494.01,183 L493.10,186 L492.20,189 L491.31,192 L490.44,195 L489.58,198 L488.73,201 L487.89,204 L487.07,207 L486.25,210 L485.45,213 L484.67,216 L483.89,219 L483.13,222 L482.38,225 L481.64,228 L480.91,231 L480.20,234 L479.49,237 L478.80,240 L478.12,243 L477.45,246 L476.80,249 L476.15,252 L475.52,255 L474.90,258 L474.29,261 L473.69,264 L473.10,267 L472.52,270 L471.96,273 L471.40,276 L470.86,279 L470.33,282 L469.81,285 L469.30,288 L468.80,291 L468.32,294 L467.84,297 L467.37,300 L466.92,303 L466.48,306 L466.05,309 L465.62,312 L465.21,315 L464.82,318 L464.43,321 L464.05,324 L463.68,327 L463.33,330 L462.98,333 L462.64,336 L462.32,339 L462.01,342 L461.70,345 L461.41,348 L461.13,351 L460.86,354 L460.60,357 L460.35,360 L460.11,363 L459.88,366 L459.66,369 L459.46,372 L459.26,375 L459.07,378 L458.90,381 L458.73,384 L458.58,387 L458.43,390 L458.30,393 L458.18,396 L458.06,399 L457.96,402 L457.87,405 L457.79,408 L457.72,411 L457.66,414 L457.61,417 L457.57,420 L457.54,423 L457.52,426 L457.52,429 L457.52,432 L457.53,435 L457.56,438 L457.59,441 L457.64,444 L457.69,447 L457.76,450 L457.84,453 L457.92,456 L458.02,459 L458.13,462 L458.25,465 L458.38,468 L458.52,471 L458.68,474 L458.84,477 L459.01,480 L459.20,483 L459.39,486 L459.60,489 L459.82,492 L460.04,495 L460.28,498 L460.53,501 L460.79,504 L461.06,507 L461.35,510 L461.64,513 L461.94,516 L462.26,519 L462.58,522 L462.92,525 L463.27,528 L463.63,531 L464.00,534 L464.38,537 L464.78,540 L465.18,543 L465.60,546 L466.03,549 L466.47,552 L466.92,555 L467.38,558 L467.85,561 L468.34,564 L468.83,567 L469.34,570 L469.86,573 L470.39,576 L470.93,579 L471.49,582 L472.05,585 L472.63,588 L473.22,591 L473.82,594 L474.44,597 L475.06,600 L475.70,603 L476.35,606 L477.01,609 L477.69,612 L478.37,615 L479.07,618 L479.78,621 L480.51,624 L481.24,627 L481.99,630 L482.75,633 L483.52,636 L484.31,639 L485.10,642 L485.91,645 L486.74,648 L487.57,651 L488.42,654 L489.28,657 L490.15,660 L491.04,663 L491.94,666 L492.85,669 L493.78,672 L494.72,675 L495.67,678 L496.64,681 L497.61,684 L498.60,687 L499.61,690 L500.63,693 L501.66,696 L502.70,699 L503.76,702 L504.84,705 L505.92,708 L507.02,711 L508.13,714 L509.26,717 L510.40,720 L511.56,723 L512.72,726 L513.91,729 L515.10,732 L516.31,735 L517.54,738 L518.78,741 L520.03,744 L521.30,747 L522.58,750 L523.88,753 L525.19,756 L526.52,759 L527.86,762 L529.21,765 L530.58,768 L531.96,771 L533.36,774 L534.78,777 L536.21,780 L537.65,783 L539.11,786 L540.58,789 L542.07,792 L543.58,795 L545.10,798 L546.63,801 L548.18,804 L549.75,807 L551.33,810 L552.92,813 L554.54,816 L556.17,819 L557.81,822 L559.47,825 L561.14,828 L562.83,831 L564.54,834" fill="none" stroke="#000" stroke-opacity=".2" stroke-width="6" filter="url(#bl)" transform="translate(3.2,0)"/>
<path d="M549.64,48 L548.06,51 L546.50,54 L544.95,57 L543.43,60 L541.92,63 L540.42,66 L538.95,69 L537.49,72 L536.04,75 L534.61,78 L533.20,81 L531.81,84 L530.43,87 L529.06,90 L527.71,93 L526.38,96 L525.06,99 L523.76,102 L522.47,105 L521.20,108 L519.94,111 L518.70,114 L517.47,117 L516.26,120 L515.06,123 L513.87,126 L512.70,129 L511.55,132 L510.41,135 L509.28,138 L508.17,141 L507.07,144 L505.98,147 L504.91,150 L503.85,153 L502.81,156 L501.78,159 L500.76,162 L499.76,165 L498.77,168 L497.79,171 L496.82,174 L495.87,177 L494.94,180 L494.01,183 L493.10,186 L492.20,189 L491.31,192 L490.44,195 L489.58,198 L488.73,201 L487.89,204 L487.07,207 L486.25,210 L485.45,213 L484.67,216 L483.89,219 L483.13,222 L482.38,225 L481.64,228 L480.91,231 L480.20,234 L479.49,237 L478.80,240 L478.12,243 L477.45,246 L476.80,249 L476.15,252 L475.52,255 L474.90,258 L474.29,261 L473.69,264 L473.10,267 L472.52,270 L471.96,273 L471.40,276 L470.86,279 L470.33,282 L469.81,285 L469.30,288 L468.80,291 L468.32,294 L467.84,297 L467.37,300 L466.92,303 L466.48,306 L466.05,309 L465.62,312 L465.21,315 L464.82,318 L464.43,321 L464.05,324 L463.68,327 L463.33,330 L462.98,333 L462.64,336 L462.32,339 L462.01,342 L461.70,345 L461.41,348 L461.13,351 L460.86,354 L460.60,357 L460.35,360 L460.11,363 L459.88,366 L459.66,369 L459.46,372 L459.26,375 L459.07,378 L458.90,381 L458.73,384 L458.58,387 L458.43,390 L458.30,393 L458.18,396 L458.06,399 L457.96,402 L457.87,405 L457.79,408 L457.72,411 L457.66,414 L457.61,417 L457.57,420 L457.54,423 L457.52,426 L457.52,429 L457.52,432 L457.53,435 L457.56,438 L457.59,441 L457.64,444 L457.69,447 L457.76,450 L457.84,453 L457.92,456 L458.02,459 L458.13,462 L458.25,465 L458.38,468 L458.52,471 L458.68,474 L458.84,477 L459.01,480 L459.20,483 L459.39,486 L459.60,489 L459.82,492 L460.04,495 L460.28,498 L460.53,501 L460.79,504 L461.06,507 L461.35,510 L461.64,513 L461.94,516 L462.26,519 L462.58,522 L462.92,525 L463.27,528 L463.63,531 L464.00,534 L464.38,537 L464.78,540 L465.18,543 L465.60,546 L466.03,549 L466.47,552 L466.92,555 L467.38,558 L467.85,561 L468.34,564 L468.83,567 L469.34,570 L469.86,573 L470.39,576 L470.93,579 L471.49,582 L472.05,585 L472.63,588 L473.22,591 L473.82,594 L474.44,597 L475.06,600 L475.70,603 L476.35,606 L477.01,609 L477.69,612 L478.37,615 L479.07,618 L479.78,621 L480.51,624 L481.24,627 L481.99,630 L482.75,633 L483.52,636 L484.31,639 L485.10,642 L485.91,645 L486.74,648 L487.57,651 L488.42,654 L489.28,657 L490.15,660 L491.04,663 L491.94,666 L492.85,669 L493.78,672 L494.72,675 L495.67,678 L496.64,681 L497.61,684 L498.60,687 L499.61,690 L500.63,693 L501.66,696 L502.70,699 L503.76,702 L504.84,705 L505.92,708 L507.02,711 L508.13,714 L509.26,717 L510.40,720 L511.56,723 L512.72,726 L513.91,729 L515.10,732 L516.31,735 L517.54,738 L518.78,741 L520.03,744 L521.30,747 L522.58,750 L523.88,753 L525.19,756 L526.52,759 L527.86,762 L529.21,765 L530.58,768 L531.96,771 L533.36,774 L534.78,777 L536.21,780 L537.65,783 L539.11,786 L540.58,789 L542.07,792 L543.58,795 L545.10,798 L546.63,801 L548.18,804 L549.75,807 L551.33,810 L552.92,813 L554.54,816 L556.17,819 L557.81,822 L559.47,825 L561.14,828 L562.83,831 L564.54,834" fill="none" stroke="#000" stroke-opacity=".22" stroke-width="1.6" filter="url(#bl2)" transform="translate(1.4,0)"/>
</g>
<path d="M549.64,48 L548.06,51 L546.50,54 L544.95,57 L543.43,60 L541.92,63 L540.42,66 L538.95,69 L537.49,72 L536.04,75 L534.61,78 L533.20,81 L531.81,84 L530.43,87 L529.06,90 L527.71,93 L526.38,96 L525.06,99 L523.76,102 L522.47,105 L521.20,108 L519.94,111 L518.70,114 L517.47,117 L516.26,120 L515.06,123 L513.87,126 L512.70,129 L511.55,132 L510.41,135 L509.28,138 L508.17,141 L507.07,144 L505.98,147 L504.91,150 L503.85,153 L502.81,156 L501.78,159 L500.76,162 L499.76,165 L498.77,168 L497.79,171 L496.82,174 L495.87,177 L494.94,180 L494.01,183 L493.10,186 L492.20,189 L491.31,192 L490.44,195 L489.58,198 L488.73,201 L487.89,204 L487.07,207 L486.25,210 L485.45,213 L484.67,216 L483.89,219 L483.13,222 L482.38,225 L481.64,228 L480.91,231 L480.20,234 L479.49,237 L478.80,240 L478.12,243 L477.45,246 L476.80,249 L476.15,252 L475.52,255 L474.90,258 L474.29,261 L473.69,264 L473.10,267 L472.52,270 L471.96,273 L471.40,276 L470.86,279 L470.33,282 L469.81,285 L469.30,288 L468.80,291 L468.32,294 L467.84,297 L467.37,300 L466.92,303 L466.48,306 L466.05,309 L465.62,312 L465.21,315 L464.82,318 L464.43,321 L464.05,324 L463.68,327 L463.33,330 L462.98,333 L462.64,336 L462.32,339 L462.01,342 L461.70,345 L461.41,348 L461.13,351 L460.86,354 L460.60,357 L460.35,360 L460.11,363 L459.88,366 L459.66,369 L459.46,372 L459.26,375 L459.07,378 L458.90,381 L458.73,384 L458.58,387 L458.43,390 L458.30,393 L458.18,396 L458.06,399 L457.96,402 L457.87,405 L457.79,408 L457.72,411 L457.66,414 L457.61,417 L457.57,420 L457.54,423 L457.52,426 L457.52,429 L457.52,432 L457.53,435 L457.56,438 L457.59,441 L457.64,444 L457.69,447 L457.76,450 L457.84,453 L457.92,456 L458.02,459 L458.13,462 L458.25,465 L458.38,468 L458.52,471 L458.68,474 L458.84,477 L459.01,480 L459.20,483 L459.39,486 L459.60,489 L459.82,492 L460.04,495 L460.28,498 L460.53,501 L460.79,504 L461.06,507 L461.35,510 L461.64,513 L461.94,516 L462.26,519 L462.58,522 L462.92,525 L463.27,528 L463.63,531 L464.00,534 L464.38,537 L464.78,540 L465.18,543 L465.60,546 L466.03,549 L466.47,552 L466.92,555 L467.38,558 L467.85,561 L468.34,564 L468.83,567 L469.34,570 L469.86,573 L470.39,576 L470.93,579 L471.49,582 L472.05,585 L472.63,588 L473.22,591 L473.82,594 L474.44,597 L475.06,600 L475.70,603 L476.35,606 L477.01,609 L477.69,612 L478.37,615 L479.07,618 L479.78,621 L480.51,624 L481.24,627 L481.99,630 L482.75,633 L483.52,636 L484.31,639 L485.10,642 L485.91,645 L486.74,648 L487.57,651 L488.42,654 L489.28,657 L490.15,660 L491.04,663 L491.94,666 L492.85,669 L493.78,672 L494.72,675 L495.67,678 L496.64,681 L497.61,684 L498.60,687 L499.61,690 L500.63,693 L501.66,696 L502.70,699 L503.76,702 L504.84,705 L505.92,708 L507.02,711 L508.13,714 L509.26,717 L510.40,720 L511.56,723 L512.72,726 L513.91,729 L515.10,732 L516.31,735 L517.54,738 L518.78,741 L520.03,744 L521.30,747 L522.58,750 L523.88,753 L525.19,756 L526.52,759 L527.86,762 L529.21,765 L530.58,768 L531.96,771 L533.36,774 L534.78,777 L536.21,780 L537.65,783 L539.11,786 L540.58,789 L542.07,792 L543.58,795 L545.10,798 L546.63,801 L548.18,804 L549.75,807 L551.33,810 L552.92,813 L554.54,816 L556.17,819 L557.81,822 L559.47,825 L561.14,828 L562.83,831 L564.54,834" fill="none" stroke="#fff" stroke-width="1.2" transform="translate(-1.1,0)"/>
<path d="M549.64,48 L548.06,51 L546.50,54 L544.95,57 L543.43,60 L541.92,63 L540.42,66 L538.95,69 L537.49,72 L536.04,75 L534.61,78 L533.20,81 L531.81,84 L530.43,87 L529.06,90 L527.71,93 L526.38,96 L525.06,99 L523.76,102 L522.47,105 L521.20,108 L519.94,111 L518.70,114 L517.47,117 L516.26,120 L515.06,123 L513.87,126 L512.70,129 L511.55,132 L510.41,135 L509.28,138 L508.17,141 L507.07,144 L505.98,147 L504.91,150 L503.85,153 L502.81,156 L501.78,159 L500.76,162 L499.76,165 L498.77,168 L497.79,171 L496.82,174 L495.87,177 L494.94,180 L494.01,183 L493.10,186 L492.20,189 L491.31,192 L490.44,195 L489.58,198 L488.73,201 L487.89,204 L487.07,207 L486.25,210 L485.45,213 L484.67,216 L483.89,219 L483.13,222 L482.38,225 L481.64,228 L480.91,231 L480.20,234 L479.49,237 L478.80,240 L478.12,243 L477.45,246 L476.80,249 L476.15,252 L475.52,255 L474.90,258 L474.29,261 L473.69,264 L473.10,267 L472.52,270 L471.96,273 L471.40,276 L470.86,279 L470.33,282 L469.81,285 L469.30,288 L468.80,291 L468.32,294 L467.84,297 L467.37,300 L466.92,303 L466.48,306 L466.05,309 L465.62,312 L465.21,315 L464.82,318 L464.43,321 L464.05,324 L463.68,327 L463.33,330 L462.98,333 L462.64,336 L462.32,339 L462.01,342 L461.70,345 L461.41,348 L461.13,351 L460.86,354 L460.60,357 L460.35,360 L460.11,363 L459.88,366 L459.66,369 L459.46,372 L459.26,375 L459.07,378 L458.90,381 L458.73,384 L458.58,387 L458.43,390 L458.30,393 L458.18,396 L458.06,399 L457.96,402 L457.87,405 L457.79,408 L457.72,411 L457.66,414 L457.61,417 L457.57,420 L457.54,423 L457.52,426 L457.52,429 L457.52,432 L457.53,435 L457.56,438 L457.59,441 L457.64,444 L457.69,447 L457.76,450 L457.84,453 L457.92,456 L458.02,459 L458.13,462 L458.25,465 L458.38,468 L458.52,471 L458.68,474 L458.84,477 L459.01,480 L459.20,483 L459.39,486 L459.60,489 L459.82,492 L460.04,495 L460.28,498 L460.53,501 L460.79,504 L461.06,507 L461.35,510 L461.64,513 L461.94,516 L462.26,519 L462.58,522 L462.92,525 L463.27,528 L463.63,531 L464.00,534 L464.38,537 L464.78,540 L465.18,543 L465.60,546 L466.03,549 L466.47,552 L466.92,555 L467.38,558 L467.85,561 L468.34,564 L468.83,567 L469.34,570 L469.86,573 L470.39,576 L470.93,579 L471.49,582 L472.05,585 L472.63,588 L473.22,591 L473.82,594 L474.44,597 L475.06,600 L475.70,603 L476.35,606 L477.01,609 L477.69,612 L478.37,615 L479.07,618 L479.78,621 L480.51,624 L481.24,627 L481.99,630 L482.75,633 L483.52,636 L484.31,639 L485.10,642 L485.91,645 L486.74,648 L487.57,651 L488.42,654 L489.28,657 L490.15,660 L491.04,663 L491.94,666 L492.85,669 L493.78,672 L494.72,675 L495.67,678 L496.64,681 L497.61,684 L498.60,687 L499.61,690 L500.63,693 L501.66,696 L502.70,699 L503.76,702 L504.84,705 L505.92,708 L507.02,711 L508.13,714 L509.26,717 L510.40,720 L511.56,723 L512.72,726 L513.91,729 L515.10,732 L516.31,735 L517.54,738 L518.78,741 L520.03,744 L521.30,747 L522.58,750 L523.88,753 L525.19,756 L526.52,759 L527.86,762 L529.21,765 L530.58,768 L531.96,771 L533.36,774 L534.78,777 L536.21,780 L537.65,783 L539.11,786 L540.58,789 L542.07,792 L543.58,795 L545.10,798 L546.63,801 L548.18,804 L549.75,807 L551.33,810 L552.92,813 L554.54,816 L556.17,819 L557.81,822 L559.47,825 L561.14,828 L562.83,831 L564.54,834" fill="none" stroke="#6e6e6e" stroke-width="1"/>
</svg>
</div><div class="t" style="left:648px;top:70.6px;font-size:14px;font-weight:700;color:#333;">BOM Formatting</div>
<div class="t" style="left:648px;top:93.3px;font-size:12px;font-weight:400;color:#333;">Please define import columns and pre-cleaning data</div>
<div class="a" style="left:636px;top:134px;width:616px;height:637px;background:#fff;border-left:2px solid #ababab;border-top:2px solid #ababab;border-right:3px solid #ababab;border-bottom:3px solid #ababab"></div>
<div class="t" style="left:649.6px;top:140.8px;font-size:12px;font-weight:400;color:#222;">Right Click Columns or Cells to Perform Actions</div>
<div class="a" style="left:638px;top:156px;width:611px;height:1px;background:#ababab;"></div>
<div class="a" style="left:638px;top:248px;width:611px;height:2px;background:#d6d6d6;"></div>
<div class="a" style="left:839px;top:162.5px;width:1px;height:81px;background:#d9d9d9;"></div>
<div class="a" style="left:1060.5px;top:162.5px;width:1px;height:81px;background:#d9d9d9;"></div>
<div class="a" style="left:1230.5px;top:162.5px;width:1px;height:81px;background:#d9d9d9;"></div>
<div class="t" style="left:628.5px;top:199.8px;width:60px;text-align:center;font-size:12px;font-weight:400;color:#333;">Filter</div>
<div class="t" style="left:672.0px;top:199.8px;width:130px;text-align:center;font-size:12px;font-weight:400;color:#333;">Map Row to Column</div>
<div class="t" style="left:671.0px;top:213.3px;width:130px;text-align:center;font-size:12px;font-weight:400;color:#333;">Headers</div>
<div class="t" style="left:784.5px;top:199.8px;width:60px;text-align:center;font-size:12px;font-weight:400;color:#333;">Delete</div>
<div class="t" style="left:784.5px;top:213.3px;width:60px;text-align:center;font-size:12px;font-weight:400;color:#333;">Row(s)</div>
<div class="t" style="left:708.0px;top:233.2px;width:60px;text-align:center;font-size:12px;font-weight:400;color:#444;">Rows</div>
<div class="t" style="left:831.5px;top:199.8px;width:60px;text-align:center;font-size:12px;font-weight:400;color:#333;">Add</div>
<div class="t" style="left:831.5px;top:213.6px;width:60px;text-align:center;font-size:12px;font-weight:400;color:#333;">Text</div>
<div class="t" style="left:869.5px;top:199.8px;width:60px;text-align:center;font-size:12px;font-weight:400;color:#333;">Fill</div>
<div class="t" style="left:869.5px;top:213.6px;width:60px;text-align:center;font-size:12px;font-weight:400;color:#333;">Down</div>
<div class="t" style="left:913.5px;top:199.8px;width:60px;text-align:center;font-size:12px;font-weight:400;color:#333;">Delete</div>
<div class="t" style="left:913.5px;top:213.6px;width:60px;text-align:center;font-size:12px;font-weight:400;color:#333;">Column</div>
<div class="t" style="left:910.5px;top:233.0px;width:80px;text-align:center;font-size:12px;font-weight:400;color:#444;">Columns</div>
<div class="t" style="left:990.6px;top:166.3px;font-size:12px;font-weight:400;color:#333;">Merge</div>
<div class="t" style="left:990px;top:189.4px;font-size:12px;font-weight:400;color:#333;">Split</div>
<div class="t" style="left:1085.6px;top:167.5px;font-size:11.5px;font-weight:400;color:#333;">Merge Existing References</div>
<div class="t" style="left:1106.0px;top:233.2px;width:80px;text-align:center;font-size:12px;font-weight:400;color:#444;">Options</div>
<div class="a" style="left:638px;top:273px;width:120px;height:20px;background:#f0f0f0;"></div>
<div class="a" style="left:759px;top:273px;width:490px;height:20px;background:#dadada;"></div>
<div class="a" style="left:638px;top:272px;width:611px;height:1px;background:#d9d9d9;"></div>
<div class="a" style="left:638px;top:293px;width:611px;height:1px;background:#d9d9d9;"></div>
<div class="a" style="left:638px;top:314px;width:611px;height:1px;background:#d9d9d9;"></div>
<div class="a" style="left:638px;top:335px;width:611px;height:1px;background:#d9d9d9;"></div>
<div class="a" style="left:638px;top:356px;width:611px;height:1px;background:#d9d9d9;"></div>
<div class="a" style="left:638px;top:377px;width:611px;height:1px;background:#d9d9d9;"></div>
<div class="a" style="left:638px;top:398px;width:611px;height:1px;background:#d9d9d9;"></div>
<div class="a" style="left:638px;top:419px;width:611px;height:1px;background:#d9d9d9;"></div>
<div class="a" style="left:638px;top:440px;width:611px;height:1px;background:#d9d9d9;"></div>
<div class="a" style="left:638px;top:461px;width:611px;height:1px;background:#d9d9d9;"></div>
<div class="a" style="left:638px;top:482px;width:611px;height:1px;background:#d9d9d9;"></div>
<div class="a" style="left:638px;top:503px;width:611px;height:1px;background:#d9d9d9;"></div>
<div class="a" style="left:638px;top:524px;width:611px;height:1px;background:#d9d9d9;"></div>
<div class="a" style="left:638px;top:545px;width:611px;height:1px;background:#d9d9d9;"></div>
<div class="a" style="left:758px;top:250px;width:1px;height:296px;background:#d9d9d9;"></div>
<div class="a" style="left:878px;top:250px;width:1px;height:296px;background:#d9d9d9;"></div>
<div class="a" style="left:998px;top:250px;width:1px;height:296px;background:#d9d9d9;"></div>
<div class="a" style="left:1118px;top:250px;width:1px;height:296px;background:#d9d9d9;"></div>
<div class="a" style="left:1239px;top:250px;width:1px;height:296px;background:#d9d9d9;"></div>
<div class="a" style="left:878px;top:273px;width:1px;height:20px;background:#cdcdcd;"></div>
<div class="a" style="left:998px;top:273px;width:1px;height:20px;background:#cdcdcd;"></div>
<div class="a" style="left:1118px;top:273px;width:1px;height:20px;background:#cdcdcd;"></div>
<div class="a" style="left:1239px;top:273px;width:1px;height:20px;background:#cdcdcd;"></div>
<div class="a" style="left:1247px;top:250px;width:1px;height:296px;background:#ececec;"></div>
<div class="t" style="left:643.3px;top:255.8px;font-size:12px;font-weight:400;color:#222;">Internal Part Numb...</div>
<div class="t" style="left:763.8px;top:255.8px;font-size:12px;font-weight:400;color:#222;">Reference</div>
<div class="t" style="left:883.5px;top:255.8px;font-size:12px;font-weight:400;color:#222;">Description</div>
<div class="t" style="left:1003.4px;top:255.8px;font-size:12px;font-weight:400;color:#222;">Quantity</div>
<div class="t" style="left:1123px;top:255.8px;font-size:12px;font-weight:400;color:#222;">Unit of Issue</div>
<div class="t" style="left:643.3px;top:277.8px;font-size:12px;font-weight:400;color:#222;">Part01</div>
<div class="t" style="left:763.8px;top:277.8px;font-size:12px;font-weight:400;color:#222;">R1-10</div>
<div class="t" style="left:883.5px;top:277.8px;font-size:12px;font-weight:400;color:#222;">Resistors</div>
<div class="t" style="left:1003.4px;top:277.8px;font-size:12px;font-weight:400;color:#222;">10</div>
<div class="t" style="left:643.3px;top:298.8px;font-size:12px;font-weight:400;color:#222;">Part02</div>
<div class="t" style="left:763.8px;top:298.8px;font-size:12px;font-weight:400;color:#222;">C1-10</div>
<div class="t" style="left:883.5px;top:298.8px;font-size:12px;font-weight:400;color:#222;">Capacitors</div>
<div class="t" style="left:1003.4px;top:298.8px;font-size:12px;font-weight:400;color:#222;">10</div>
<div class="t" style="left:643.3px;top:319.8px;font-size:12px;font-weight:400;color:#222;">Part03</div>
<div class="t" style="left:763.8px;top:319.8px;font-size:12px;font-weight:400;color:#222;">D1-10</div>
<div class="t" style="left:883.5px;top:319.8px;font-size:12px;font-weight:400;color:#222;">Diodes</div>
<div class="t" style="left:1003.4px;top:319.8px;font-size:12px;font-weight:400;color:#222;">10</div>
<div class="t" style="left:643.3px;top:340.8px;font-size:12px;font-weight:400;color:#222;">Part04</div>
<div class="t" style="left:763.8px;top:340.8px;font-size:12px;font-weight:400;color:#222;">U1-10</div>
<div class="t" style="left:883.5px;top:340.8px;font-size:12px;font-weight:400;color:#222;">IC's</div>
<div class="t" style="left:1003.4px;top:340.8px;font-size:12px;font-weight:400;color:#222;">10</div>
<div class="t" style="left:643.3px;top:361.8px;font-size:12px;font-weight:400;color:#222;">Part05</div>
<div class="t" style="left:763.8px;top:361.8px;font-size:12px;font-weight:400;color:#222;">L1-10</div>
<div class="t" style="left:883.5px;top:361.8px;font-size:12px;font-weight:400;color:#222;">Inductors</div>
<div class="t" style="left:1003.4px;top:361.8px;font-size:12px;font-weight:400;color:#222;">10</div>
<div class="t" style="left:643.3px;top:382.8px;font-size:12px;font-weight:400;color:#222;">Part06</div>
<div class="t" style="left:763.8px;top:382.8px;font-size:12px;font-weight:400;color:#222;">P1</div>
<div class="t" style="left:883.5px;top:382.8px;font-size:12px;font-weight:400;color:#222;">ManPart1</div>
<div class="t" style="left:1003.4px;top:382.8px;font-size:12px;font-weight:400;color:#222;">1</div>
<div class="t" style="left:1123px;top:382.8px;font-size:12px;font-weight:400;color:#222;">ea</div>
<div class="t" style="left:643.3px;top:403.8px;font-size:12px;font-weight:400;color:#222;">Part07</div>
<div class="t" style="left:763.8px;top:403.8px;font-size:12px;font-weight:400;color:#222;">P2</div>
<div class="t" style="left:883.5px;top:403.8px;font-size:12px;font-weight:400;color:#222;">ManPart2</div>
<div class="t" style="left:1003.4px;top:403.8px;font-size:12px;font-weight:400;color:#222;">1</div>
<div class="t" style="left:1123px;top:403.8px;font-size:12px;font-weight:400;color:#222;">ea</div>
<div class="t" style="left:643.3px;top:424.8px;font-size:12px;font-weight:400;color:#222;">Part08</div>
<div class="t" style="left:763.8px;top:424.8px;font-size:12px;font-weight:400;color:#222;">P3</div>
<div class="t" style="left:883.5px;top:424.8px;font-size:12px;font-weight:400;color:#222;">ManPart3</div>
<div class="t" style="left:1003.4px;top:424.8px;font-size:12px;font-weight:400;color:#222;">1</div>
<div class="t" style="left:1123px;top:424.8px;font-size:12px;font-weight:400;color:#222;">ea</div>
<div class="t" style="left:643.3px;top:445.8px;font-size:12px;font-weight:400;color:#222;">Part09</div>
<div class="t" style="left:763.8px;top:445.8px;font-size:12px;font-weight:400;color:#222;">P4</div>
<div class="t" style="left:883.5px;top:445.8px;font-size:12px;font-weight:400;color:#222;">ManPart4</div>
<div class="t" style="left:1003.4px;top:445.8px;font-size:12px;font-weight:400;color:#222;">1</div>
<div class="t" style="left:1123px;top:445.8px;font-size:12px;font-weight:400;color:#222;">ea</div>
<div class="t" style="left:643.3px;top:466.8px;font-size:12px;font-weight:400;color:#222;">Part10</div>
<div class="t" style="left:763.8px;top:466.8px;font-size:12px;font-weight:400;color:#222;">P5</div>
<div class="t" style="left:883.5px;top:466.8px;font-size:12px;font-weight:400;color:#222;">ManPart5</div>
<div class="t" style="left:1003.4px;top:466.8px;font-size:12px;font-weight:400;color:#222;">1</div>
<div class="t" style="left:1123px;top:466.8px;font-size:12px;font-weight:400;color:#222;">ea</div>
<div class="t" style="left:643.3px;top:487.8px;font-size:12px;font-weight:400;color:#222;">Paste1</div>
<div class="t" style="left:883.5px;top:487.8px;font-size:12px;font-weight:400;color:#222;">Solder Paste</div>
<div class="t" style="left:1003.4px;top:487.8px;font-size:12px;font-weight:400;color:#222;">1.75</div>
<div class="t" style="left:1123px;top:487.8px;font-size:12px;font-weight:400;color:#222;">oz</div>
<div class="t" style="left:643.3px;top:508.8px;font-size:12px;font-weight:400;color:#222;">Adhesive1</div>
<div class="t" style="left:883.5px;top:508.8px;font-size:12px;font-weight:400;color:#222;">Adhesive</div>
<div class="t" style="left:1003.4px;top:508.8px;font-size:12px;font-weight:400;color:#222;">5.25</div>
<div class="t" style="left:1123px;top:508.8px;font-size:12px;font-weight:400;color:#222;">mL</div>
<div class="t" style="left:643.3px;top:529.8px;font-size:12px;font-weight:400;color:#222;">Tool01</div>
<div class="t" style="left:1003.4px;top:529.8px;font-size:12px;font-weight:400;color:#222;">1</div>
<div class="a" style="left:638px;top:613px;width:611px;height:1px;background:#a8a8a8;"></div>
<div class="a" style="left:638px;top:614px;width:611px;height:1px;background:#d8d8d8;"></div>
<div class="a" style="left:936px;top:616px;width:1px;height:1px;background:#888;"></div>
<div class="a" style="left:938px;top:616px;width:1px;height:1px;background:#888;"></div>
<div class="a" style="left:940px;top:616px;width:1px;height:1px;background:#888;"></div>
<div class="a" style="left:942px;top:616px;width:1px;height:1px;background:#888;"></div>
<div class="a" style="left:944px;top:616px;width:1px;height:1px;background:#888;"></div>
<div class="a" style="left:946px;top:616px;width:1px;height:1px;background:#888;"></div>
<div class="a" style="left:948px;top:616px;width:1px;height:1px;background:#888;"></div>
<div class="a" style="left:950px;top:616px;width:1px;height:1px;background:#888;"></div>
<div class="a" style="left:638px;top:620px;width:611px;height:1px;background:#b0b0b0;"></div>
<div class="t" style="left:649.7px;top:626.3px;font-size:12px;font-weight:400;color:#222;">Action Recorder</div>
<div class="a" style="left:638px;top:641px;width:611px;height:1px;background:#b4b4b4;"></div>
<div class="t" style="left:642.2px;top:648.8px;font-size:11.4px;font-weight:400;color:#222;">Saved Recordings:</div>
<div class="a" style="left:744px;top:643.5px;width:150px;height:21.5px;background:#fff;border:1px solid #acacac"></div>
<div class="a" style="left:877px;top:645.5px;width:15px;height:18px;background:linear-gradient(#f0f0f0,#e2e2e2);border:1px solid #b5b5b5"></div>
<svg class="a" style="left:0;top:0" width="1" height="1"><path d="M881.3,651.8 L884.5,655 L887.7,651.8" fill="none" stroke="#555" stroke-width="1.3"/></svg>
<div class="t" style="left:920.6px;top:648.8px;font-size:12px;font-weight:400;color:#222;">Apply</div>
<div class="t" style="left:958px;top:648.8px;font-size:12px;font-weight:400;color:#222;">Save</div>
<div class="t" style="left:990.4px;top:648.8px;font-size:12px;font-weight:400;color:#222;">Import</div>
<div class="t" style="left:1033px;top:648.8px;font-size:12px;font-weight:400;color:#222;">Export</div>
<div class="t" style="left:1074.5px;top:648.8px;font-size:12px;font-weight:400;color:#c9c9c9;">Delete</div>
<div class="a" style="left:1113px;top:648px;width:1px;height:14px;background:#cfcfcf;"></div>
<div class="t" style="left:1119.3px;top:648.8px;font-size:12px;font-weight:400;color:#222;">Delete Action</div>
<svg class="a" style="left:0;top:0" width="1" height="1"><path d="M1239.5,661 H1245.5 V655 Z" fill="#555"/></svg>
<div class="a" style="left:638px;top:666px;width:593px;height:1px;background:#d9d9d9;"></div>
<div class="a" style="left:655px;top:730px;width:130px;height:20px;background:#f0f0f0;"></div>
<div class="a" style="left:786px;top:730px;width:445px;height:20px;background:#dadada;"></div>
<div class="a" style="left:638px;top:689px;width:593px;height:1px;background:#d9d9d9;"></div>
<div class="a" style="left:638px;top:708px;width:593px;height:1px;background:#d9d9d9;"></div>
<div class="a" style="left:638px;top:729px;width:593px;height:1px;background:#d9d9d9;"></div>
<div class="a" style="left:638px;top:750px;width:593px;height:1px;background:#d9d9d9;"></div>
<div class="a" style="left:654px;top:666px;width:1px;height:85px;background:#d9d9d9;"></div>
<div class="a" style="left:785px;top:666px;width:1px;height:85px;background:#d9d9d9;"></div>
<div class="a" style="left:936px;top:666px;width:1px;height:85px;background:#d9d9d9;"></div>
<div class="a" style="left:1219px;top:666px;width:1px;height:85px;background:#d9d9d9;"></div>
<div class="a" style="left:654px;top:751px;width:1px;height:17px;background:#d9d9d9;"></div>
<div class="a" style="left:936px;top:730px;width:1px;height:20px;background:#cdcdcd;"></div>
<div class="a" style="left:1219px;top:730px;width:1px;height:20px;background:#cdcdcd;"></div>
<div class="t" style="left:659.4px;top:672.8px;font-size:12px;font-weight:400;color:#222;">Action</div>
<div class="t" style="left:790.3px;top:673.1px;font-size:11.7px;font-weight:400;color:#222;">Column(s)/Row(s) Affected</div>
<div class="t" style="left:941px;top:672.8px;font-size:12px;font-weight:400;color:#222;">Parameters</div>
<div class="t" style="left:1224px;top:672.8px;font-size:12px;font-weight:400;color:#222;width:7px;overflow:hidden">C</div>
<div class="t" style="left:659.4px;top:693.3px;font-size:12px;font-weight:400;color:#222;">Define Column Header</div>
<div class="t" style="left:790.3px;top:693.3px;font-size:12px;font-weight:400;color:#222;">Quantity</div>
<div class="t" style="left:941px;top:693.3px;font-size:12px;font-weight:400;color:#222;">Definition: Quantity, Previous Name: F4</div>
<div class="t" style="left:659.4px;top:714.3px;font-size:12px;font-weight:400;color:#222;">Define Column Header</div>
<div class="t" style="left:790.3px;top:714.3px;font-size:12px;font-weight:400;color:#222;">Unit of Issue</div>
<div class="t" style="left:941px;top:714.3px;font-size:12px;font-weight:400;color:#222;">Definition: Unit of Issue, Previous Name: F5</div>
<div class="t" style="left:659.4px;top:735.3px;font-size:12px;font-weight:400;color:#222;">Fill Down</div>
<div class="t" style="left:790.3px;top:735.3px;font-size:12px;font-weight:400;color:#222;">Internal Part Number</div>
<svg class="a" style="left:0;top:0" width="1" height="1"><path d="M644.8,736.5 L649.2,739.8 L644.8,743.2 Z" fill="#555"/></svg>
<div class="a" style="left:655px;top:751px;width:576px;height:17px;background:#f0f0f0;"></div>
<div class="a" style="left:672px;top:752px;width:492px;height:15px;background:#c2c2c2;"></div>
<div class="a" style="left:1231px;top:666px;width:18px;height:23px;background:#fff;"></div>
<div class="a" style="left:1231px;top:689px;width:18px;height:62px;background:#f0f0f0;"></div>
<div class="a" style="left:1231px;top:723px;width:17px;height:11px;background:#c2c2c2;"></div>
<div class="a" style="left:1231px;top:751px;width:18px;height:17px;background:#fff;"></div>
<svg class="a" style="left:0;top:0" width="1" height="1"><g fill="none" stroke="#606060" stroke-width="1.2">
<path d="M665.5,755.5 L662,759.3 L665.5,763"/><path d="M1221,755.5 L1224.5,759.3 L1221,763"/>
<path d="M1236.3,702.5 L1240,699 L1243.7,702.5"/><path d="M1236.3,741 L1240,744.5 L1243.7,741"/>
</g></svg><svg class="a" style="left:0;top:0" width="1268" height="838" viewBox="0 0 1268 838" pointer-events="none">
<defs>
<radialGradient id="rG" cx=".45" cy=".3" r=".75"><stop offset="0" stop-color="#f05a6a"/><stop offset=".55" stop-color="#d8102a"/><stop offset="1" stop-color="#b00018"/></radialGradient>
<radialGradient id="grG" cx=".45" cy=".3" r=".75"><stop offset="0" stop-color="#8edc7a"/><stop offset=".55" stop-color="#3fae3a"/><stop offset="1" stop-color="#2a8f2a"/></radialGradient>
<radialGradient id="blG" cx=".45" cy=".3" r=".75"><stop offset="0" stop-color="#9cc0f8"/><stop offset=".6" stop-color="#4a7de0"/><stop offset="1" stop-color="#2f5ec0"/></radialGradient>
<linearGradient id="barG" x1="0" y1="0" x2="1" y2="0"><stop offset="0" stop-color="#fff"/><stop offset="1" stop-color="#c4c4c4"/></linearGradient>
<linearGradient id="funG" x1="0" y1="0" x2="1" y2="0"><stop offset="0" stop-color="#e8e8e8"/><stop offset=".5" stop-color="#8c8c8c"/><stop offset="1" stop-color="#cfcfcf"/></linearGradient>
<linearGradient id="tbox" x1="0" y1="0" x2="0" y2="1"><stop offset="0" stop-color="#fff"/><stop offset=".55" stop-color="#f4f8fb"/><stop offset=".7" stop-color="#d8e8f4"/><stop offset="1" stop-color="#fafcfd"/></linearGradient>
<linearGradient id="tG" x1="0" y1="0" x2="0" y2="1"><stop offset="0" stop-color="#555"/><stop offset=".6" stop-color="#333"/><stop offset="1" stop-color="#666"/></linearGradient>
</defs>
<!-- Filter -->
<ellipse cx="664.5" cy="194" rx="9" ry="1.6" fill="#000" opacity=".12"/>
<path d="M656,167.6 Q656,164 664.5,164 Q673,164 673,167.6 L667,178.5 V188 Q664.5,189.5 662,188 V178.5 Z" fill="url(#funG)"/>
<ellipse cx="664.5" cy="167.6" rx="8.3" ry="3.2" fill="#d8d8d8" stroke="#a0a0a0" stroke-width=".6"/>
<ellipse cx="664.5" cy="168" rx="5.5" ry="1.8" fill="#777"/>
<path d="M644.8,164.8 L660,166.5 V192.5 L644.8,190 Z" fill="#e9eff5" stroke="#7aa2c4" stroke-width="1"/>
<g fill="none" stroke="#9a9a9a" stroke-width=".8">
<path d="M647,168 V188.5 M650.8,168.4 V189 M654.5,168.8 V189.5 M657.8,169.1 V190"/>
<path d="M647,172 L657.8,173 M647,176 L657.8,177 M647,180 L657.8,181 M647,184 L657.8,185"/>
</g>
<!-- Map row -->
<rect x="729" y="164" width="17" height="29" fill="#e6e8ea" stroke="#a8b0b6" stroke-width="1"/>
<rect x="729" y="164" width="17" height="6.5" fill="#22d45c"/>
<g stroke="#cfd5da" stroke-width=".7"><path d="M733,171 V192 M737.5,171 V192 M742,171 V192"/><path d="M730,175 H745 M730,179 H745 M730,183 H745 M730,187 H745"/></g>
<rect x="730" y="180" width="15" height="6" fill="#d6ecf6" opacity=".6"/>
<!-- Delete rows / column, fill down circles -->
<g id="ring">
<circle cx="814.5" cy="178.3" r="14" fill="#fff" stroke="#6e6e6e" stroke-width="1.2"/>
<circle cx="814.5" cy="178.3" r="11.6" fill="none" stroke="#8a8a8a" stroke-width="1"/>
</g>
<circle cx="814.5" cy="178.3" r="11" fill="url(#rG)"/>
<rect x="807.1" y="174.9" width="15.1" height="5.9" rx="1" fill="url(#barG)"/>
<use href="#ring" transform="translate(129,0)"/>
<circle cx="943.5" cy="178.3" r="11" fill="url(#rG)"/>
<rect x="936.1" y="174.9" width="15.1" height="5.9" rx="1" fill="url(#barG)"/>
<use href="#ring" transform="translate(85,0)"/>
<circle cx="899.5" cy="178.3" r="11" fill="url(#grG)"/>
<path d="M896,171.5 H903 V180 H907 L899.5,186.7 L892,180 H896 Z" fill="#fafafa"/>
<!-- T box -->
<path d="M850,165 L871.5,166.5 L873,168 V193.5 L851.5,192 L850,191 Z" fill="#bcc4c8"/>
<rect x="850" y="165" width="21.5" height="26.5" fill="url(#tbox)" stroke="#c8d0d4" stroke-width=".8"/>
<path d="M855,169.3 H865.8 V174.4 H862.7 V187.7 H857.6 V174.4 H855 Z" fill="url(#tG)"/>
<!-- merge icon -->
<g id="mrg">
<rect x="973.8" y="164.6" width="10.6" height="12.8" fill="#f6f9fa" stroke="#7c878c" stroke-width="1.3"/>
<rect x="978.7" y="165" width=".9" height="12.2" fill="#8a979c"/>
<path d="M974.6,169.6 H976.4 V167.9 L978.6,170.9 L976.4,173.9 V172.2 H974.6 Z" fill="#16a02a"/>
<path d="M983.6,169.6 H981.8 V167.9 L979.6,170.9 L981.8,173.9 V172.2 H983.6 Z" fill="#16a02a"/>
</g>
<use href="#mrg" transform="translate(94.8,0.3)"/>
<!-- split icon -->
<rect x="975.6" y="186.9" width="7" height="14.2" fill="#f2f7f9" stroke="#7c878c" stroke-width="1.2"/>
<rect x="978.8" y="187.2" width=".9" height="13.6" fill="#8a979c"/>
<path d="M976.2,194.2 L978.6,191.9 V193.3 H982 V195.1 H978.6 V196.5 Z" fill="#16a02a"/>
<rect x="976" y="195.5" width="6.3" height="5" fill="#d8ecf4" opacity=".7"/>
<!-- teal sheet -->
<rect x="1036.5" y="164.5" width="9.5" height="13.5" fill="#eef2f4" stroke="#9aa4a8" stroke-width=".9"/>
<rect x="1036.5" y="164" width="9.5" height="3" fill="#3ab0e0"/>
<rect x="1033.5" y="166" width="3.5" height="11" fill="#e6eef2" stroke="#aab" stroke-width=".5"/>
<path d="M1034,165.5 L1038,167.5 L1036,169 Z" fill="#2aaa3a"/>
<!-- bottle -->
<rect x="1036" y="188" width="7.7" height="13" rx="2" fill="#7b97aa"/>
<rect x="1038" y="186.9" width="3.6" height="2.5" fill="#3a6a88"/>
<rect x="1037.5" y="193" width="3.5" height="5" fill="#c8d4dc"/>
<!-- apply icon -->
<circle cx="908.5" cy="653.5" r="6.8" fill="#fff" stroke="#6e6e6e" stroke-width="1"/>
<circle cx="908.5" cy="653.5" r="5.3" fill="url(#blG)" stroke="#8a8a8a" stroke-width=".5"/>
<path d="M906.6,650.6 L911.4,653.5 L906.6,656.4 Z" fill="#fff"/>
</svg><div class="a" style="left:646px;top:780px;width:89px;height:38px;background:linear-gradient(#f0f0f0,#e6e6e6);border:1px solid #9e9e9e"></div>
<div class="a" style="left:740px;top:780px;width:89px;height:38px;background:linear-gradient(#f0f0f0,#e6e6e6);border:1.5px solid #3c7cbc"></div>
<div class="a" style="left:834px;top:780px;width:101px;height:38px;background:linear-gradient(#eaeaea,#e2e2e2);border:1px solid #c4c4c4"></div>
<div class="t" style="left:694.5px;top:793.8px;font-size:12px;font-weight:700;color:#222;">Back</div>
<div class="t" style="left:788.2px;top:793.6px;font-size:12.3px;font-weight:700;color:#222;">Next</div>
<div class="t" style="left:882px;top:794.3px;font-size:12.6px;font-weight:700;color:#8c8c8c;">Import</div>
<svg class="a" style="left:0;top:0" width="1268" height="838" viewBox="0 0 1268 838" pointer-events="none">
<defs>
<radialGradient id="bgG" cx=".45" cy=".3" r=".75"><stop offset="0" stop-color="#a6e296"/><stop offset=".5" stop-color="#4cb844"/><stop offset="1" stop-color="#3aa838"/></radialGradient>
<linearGradient id="arG" x1="0" y1="0" x2="1" y2="0"><stop offset="0" stop-color="#fff"/><stop offset=".6" stop-color="#f4f4f4"/><stop offset="1" stop-color="#c8c8c8"/></linearGradient>
<linearGradient id="chk" x1="0" y1="0" x2="0" y2="1"><stop offset="0" stop-color="#d6f0c8"/><stop offset="1" stop-color="#7ccf6c"/></linearGradient>
<linearGradient id="chk2" x1="0" y1="0" x2="0" y2="1"><stop offset="0" stop-color="#9ef27a"/><stop offset=".5" stop-color="#3cc01c"/><stop offset="1" stop-color="#1e8a10"/></linearGradient>
<linearGradient id="orG" x1="0" y1="0" x2="0" y2="1"><stop offset="0" stop-color="#f8b572"/><stop offset=".45" stop-color="#f8a65a"/><stop offset=".5" stop-color="#f89540"/><stop offset="1" stop-color="#fdbd72"/></linearGradient>
<linearGradient id="bluC" x1="1" y1="0" x2="0" y2="1"><stop offset="0" stop-color="#3f70a8"/><stop offset=".35" stop-color="#5582b6" stop-opacity=".95"/><stop offset=".55" stop-color="#a9bcd2" stop-opacity=".8"/><stop offset=".75" stop-color="#c8ccd6" stop-opacity=".75"/><stop offset="1" stop-color="#c8ccd6" stop-opacity=".75"/></linearGradient>
<linearGradient id="bluF" x1="556" y1="424" x2="430" y2="548" gradientUnits="userSpaceOnUse"><stop offset="0" stop-color="#3a6ca6"/><stop offset=".3" stop-color="#4677ae"/><stop offset=".52" stop-color="#9ab0ca"/><stop offset=".66" stop-color="#c4cbd7"/><stop offset="1" stop-color="#ced2da"/></linearGradient>
<linearGradient id="bluS" x1="0" y1="0" x2="1" y2="1"><stop offset="0" stop-color="#fff" stop-opacity="0"/><stop offset=".8" stop-color="#fff" stop-opacity="0"/><stop offset=".9" stop-color="#fff" stop-opacity=".3"/><stop offset="1" stop-color="#fff" stop-opacity="0"/></linearGradient>
</defs>
<g id="bring">
<circle cx="675.5" cy="798.5" r="13.8" fill="#fff" stroke="#606060" stroke-width="1.3"/>
<circle cx="675.5" cy="798.5" r="11.4" fill="none" stroke="#7a7a7a" stroke-width="1"/>
<circle cx="675.5" cy="798.5" r="10.8" fill="url(#bgG)"/>
</g>
<path d="M667.7,798.2 L676,792.6 V795.7 H683 V800.6 H676 V804 Z" fill="url(#arG)"/>
<use href="#bring" transform="translate(94.5,0)"/>
<path d="M778.3,798.2 L770,792.6 V795.7 H763 V800.6 H770 V804 Z" fill="url(#arG)"/>
<!-- import check -->
<path d="M850.5,798.5 L857,793 L862,798.5 L872.5,788.5 L877.5,793 L862,809 Z" fill="url(#chk)" stroke="#8ccf80" stroke-width=".8"/>
<!-- cards -->
<rect x="449" y="195" width="54" height="19" rx="2" fill="url(#bluC)"/>
<rect x="413" y="258" width="96" height="34" rx="3" fill="url(#bluC)"/>
<filter id="cs" x="-10%" y="-10%" width="120%" height="130%"><feGaussianBlur stdDeviation=".9"/></filter>
<rect x="377" y="341.5" width="157" height="59" rx="4" fill="#111" opacity=".8" filter="url(#cs)"/>
<rect x="375" y="339" width="156" height="59" rx="4" fill="url(#orG)"/>
<rect x="369" y="454" width="168" height="59" rx="4.5" fill="url(#bluF)" opacity=".93"/>
<linearGradient id="glF" x1="470" y1="478" x2="540" y2="525" gradientUnits="userSpaceOnUse"><stop offset="0" stop-color="#fff" stop-opacity="0"/><stop offset=".6" stop-color="#fff" stop-opacity="0"/><stop offset="1" stop-color="#fff" stop-opacity=".32"/></linearGradient>
<rect x="369" y="454" width="168" height="59" rx="4.5" fill="url(#glF)"/>
<!-- finish check -->
<path d="M515,469 L520.5,464 L525.5,470 L535.5,457.5 L540,462 L525.5,479 Z" fill="url(#chk2)" stroke="#2a9a1a" stroke-width=".7"/>
<!-- bom icon -->
<path d="M509,347 L519,343 V364 L509,366 Z" fill="#8a2020"/>
<path d="M513,346 L516,344 V365 L513,366 Z" fill="#b04040"/>
<path d="M518,343 L528,346 V364 L518,362 Z" fill="#f2f2f2" stroke="#888" stroke-width=".6"/>
<g stroke="#999" stroke-width=".6"><path d="M520,347 H526 M520,349.5 H526 M520,352 H526 M520,354.5 H526 M520,357 H526 M520,359.5 H526"/></g>
<rect x="528.5" y="347" width="2" height="3" fill="#e03030"/><rect x="528.5" y="352" width="2" height="3" fill="#30c030"/><rect x="528.5" y="357" width="2" height="3" fill="#3050e0"/>
<!-- cad icon -->
<path d="M498.5,260 H505 L506,261 V271 H498.5 Z" fill="#f2f6f9" stroke="#9ab" stroke-width=".6"/>
<rect x="501.5" y="262.5" width="6.8" height="10" fill="#eaf4fa" stroke="#22aee8" stroke-width="1"/>
<g stroke="#22aee8" stroke-width=".9"><path d="M503,265.3 H507 M503,267.6 H507 M503,269.9 H507"/></g>
<rect x="498.5" y="260" width="7" height="1.6" fill="#22aee8"/>
<!-- load icon -->
<path d="M497.3,196 H501 L502.5,197.5 V203.5 H497.3 Z" fill="#f6f6f6" stroke="#b8bcc0" stroke-width=".5"/>
<rect x="498.2" y="200.6" width="3" height=".9" fill="#22aa22"/>
</svg>
<div class="t" style="left:383.5px;top:349.5px;font-size:11.4px;font-weight:700;color:#33373c;">BOM Formatting</div>
<div class="t" style="left:383.5px;top:373.0px;font-size:9.2px;font-weight:400;color:#3a3a3a;">Set BOM Cleaning Options</div>
<div class="t" style="left:375px;top:462.9px;font-size:12.6px;font-weight:700;color:#2e2e2e;">Finish Import</div>
<div class="t" style="left:375px;top:489.2px;font-size:10.4px;font-weight:400;color:#333;">Finish Importing of Files</div>
<div class="t" style="left:415.8px;top:263.0px;font-size:7px;font-weight:700;color:#33383e;">Set CAD Options</div>
<div class="t" style="left:415.8px;top:277.7px;font-size:6px;font-weight:400;color:#555;">Set the required options</div>
<div class="t" style="left:451px;top:196.6px;font-size:5.2px;font-weight:700;color:#1a1a1a;transform:scaleX(.74);transform-origin:0 0;-webkit-text-stroke:.15px #222">Load Design Files</div>
</body></html>
